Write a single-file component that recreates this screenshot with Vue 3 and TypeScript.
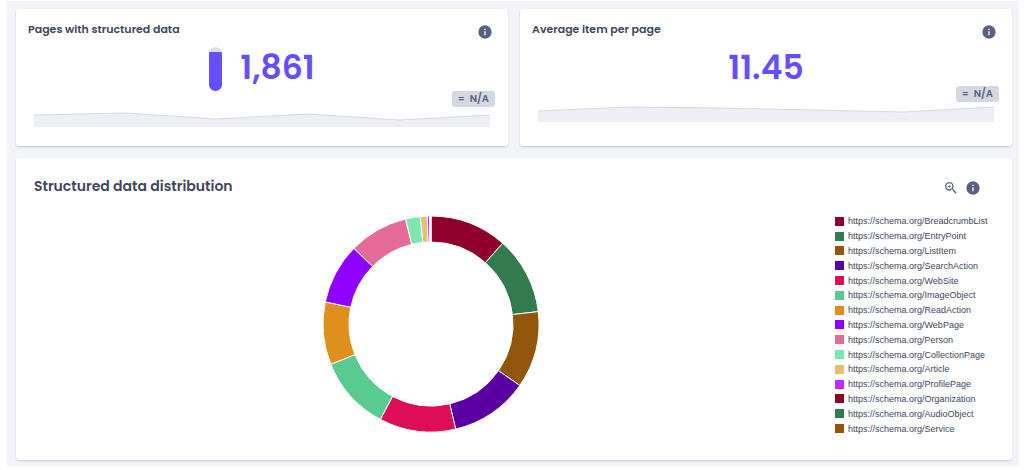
<script setup lang="ts">
interface Metric {
  id: string
  title: string
  value: string
  gauge: number | null
  trend: number[]
}

interface Slice {
  name: string
  color: string
  from: number
  to: number
}

const metrics: Metric[] = [
  { id: 'pages', title: 'Pages with structured data', value: '1,861', gauge: 88, trend: [8, 6, 12, 7, 13, 8] },
  { id: 'average', title: 'Average item per page', value: '11.45', gauge: null, trend: [9, 5, 6, 8, 10, 5] },
]

const types: [string, string, number][] = [
  ['BreadcrumbList', '#8f002d', 41.6],
  ['EntryPoint', '#337a4e', 83.4],
  ['ListItem', '#91560b', 124.7],
  ['SearchAction', '#5a00a3', 166.8],
  ['WebSite', '#de0d57', 208],
  ['ImageObject', '#59cb90', 248.1],
  ['ReadAction', '#df901c', 281.8],
  ['WebPage', '#9000ff', 314.5],
  ['Person', '#e56c98', 346.4],
  ['CollectionPage', '#7ce8b0', 354.3],
  ['Article', '#e9c072', 358],
  ['ProfilePage', '#b82eff', 359.2],
  ['Organization', '#8f002d', 359.6],
  ['AudioObject', '#337a4e', 359.8],
  ['Service', '#91560b', 360],
]

const slices: Slice[] = types.map(([name, color, to], i) => ({
  name: `https://schema.org/${name}`,
  color,
  from: i === 0 ? 0 : types[i - 1][2],
  to,
}))

function point(radius: number, degrees: number): string {
  const a = (degrees * Math.PI) / 180
  return `${(110 + radius * Math.sin(a)).toFixed(2)} ${(110 - radius * Math.cos(a)).toFixed(2)}`
}

function ring(s: Slice): string {
  return `M${point(108, s.from)}A108 108 0 0 1 ${point(108, s.to)}L${point(82, s.to)}A82 82 0 0 0 ${point(82, s.from)}Z`
}

function line(trend: number[]): string {
  return trend.map((y, i) => `${(i * 456) / (trend.length - 1)},${y}`).join(' ')
}

const infoPath =
  'M13 9h-2V7h2m0 10h-2v-6h2m-1-9A10 10 0 0 0 2 12a10 10 0 0 0 10 10 10 10 0 0 0 10-10A10 10 0 0 0 12 2Z'
const zoomPath =
  'M15.5 14h-.79l-.28-.27A6.47 6.47 0 0 0 16 9.5 6.5 6.5 0 1 0 9.5 16c1.61 0 3.09-.59 4.23-1.57l.27.28v.79l5 4.99L20.49 19l-4.99-5m-6 0C7 14 5 12 5 9.5S7 5 9.5 5 14 7 14 9.5 12 14 9.5 14m2.5-4h-2v2H9v-2H7V9h2V7h1v2h2v1Z'
</script>

<template>
  <main class="panel">
    <section v-for="m in metrics" :key="m.id" class="card metric" :class="m.id" :aria-labelledby="m.id">
      <header class="metric-head">
        <h2 :id="m.id" class="metric-title">{{ m.title }}</h2>
        <button type="button" class="icon" :aria-label="`About ${m.title}`">
          <svg viewBox="0 0 24 24"><path :d="infoPath" /></svg>
        </button>
      </header>
      <div class="reading">
        <span v-if="m.gauge !== null" class="gauge">
          <span class="level" :style="{ height: m.gauge + '%' }"></span>
        </span>
        <span class="value">{{ m.value }}</span>
      </div>
      <div class="change">
        <span class="badge"><span class="equal">=</span>N/A</span>
      </div>
      <svg class="trend" viewBox="0 0 456 20" preserveAspectRatio="none" aria-hidden="true">
        <polygon :points="`0,20 ${line(m.trend)} 456,20`" fill="#eeeff4" />
        <polyline :points="line(m.trend)" fill="none" stroke="#d6d8e1" />
      </svg>
    </section>

    <section class="card distribution" aria-labelledby="distribution">
      <header class="dist-head">
        <h2 id="distribution" class="dist-title">Structured data distribution</h2>
        <div class="actions">
          <button type="button" class="icon" aria-label="Zoom in">
            <svg viewBox="0 0 24 24"><path :d="zoomPath" /></svg>
          </button>
          <button type="button" class="icon" aria-label="About structured data distribution">
            <svg viewBox="0 0 24 24"><path :d="infoPath" /></svg>
          </button>
        </div>
      </header>
      <div class="dist-body">
        <div class="chart">
          <svg class="donut" viewBox="0 0 220 220" role="img" aria-labelledby="distribution">
            <path v-for="s in slices" :key="s.name" :d="ring(s)" :fill="s.color" stroke="#fff" />
          </svg>
        </div>
        <ul class="legend">
          <li v-for="s in slices" :key="s.name">
            <span class="swatch" :style="{ background: s.color }"></span>{{ s.name }}
          </li>
        </ul>
      </div>
    </section>
  </main>
</template>

<style>
body {
  margin: 0;
  background: #fff;
}
</style>

<style scoped>
.panel {
  display: grid;
  grid-template-columns: 1fr 1fr;
  gap: 12px;
  margin: 1px 5px 0 7px;
  padding: 8px 7px 6px 9px;
  background: #f3f4f8;
  color: #41455a;
  font-family: Poppins, Inter, "Open Sans", sans-serif;
}
.card {
  background: #fff;
  border-radius: 3px;
  box-shadow: 0 1px 2px rgba(60, 66, 95, 0.25);
}
h2 {
  margin: 0;
  font-weight: 600;
}
.metric {
  padding-bottom: 19px;
}
.average {
  padding-bottom: 24px;
}
.metric-head {
  display: flex;
  justify-content: space-between;
  align-items: flex-start;
  height: 23px;
  padding: 15px 15px 0 12px;
}
.metric-title {
  font-size: 11px;
  line-height: 11px;
}
.icon {
  display: block;
  width: 16px;
  height: 16px;
  padding: 0;
  border: 0;
  background: none;
  color: #5c6184;
  cursor: pointer;
}
.icon svg {
  display: block;
  width: 16px;
  height: 16px;
  fill: currentColor;
}
.reading {
  display: flex;
  justify-content: center;
  gap: 18px;
  height: 44px;
}
.average .reading {
  height: 39px;
}
.value {
  color: #654ffb;
  font-size: 33px;
  font-weight: 600;
  line-height: 42px;
}
.gauge {
  display: flex;
  align-items: flex-end;
  width: 13px;
  height: 44px;
  border-radius: 7px;
  overflow: hidden;
  background: #dcdee6;
}
.level {
  width: 100%;
  background: #654ffb;
}
.change {
  display: flex;
  justify-content: flex-end;
  padding-right: 13px;
}
.badge {
  display: flex;
  justify-content: space-between;
  box-sizing: border-box;
  width: 43px;
  height: 16px;
  padding: 0 6px;
  border-radius: 3px;
  background: #d5d7e1;
  color: #5c6184;
  font-size: 10px;
  font-weight: 600;
  line-height: 16px;
}
.equal {
  font-size: 9px;
}
.trend {
  display: block;
  width: calc(100% - 36px);
  height: 20px;
  margin: 0 18px;
}
.distribution {
  grid-column: 1 / -1;
}
.dist-head {
  display: flex;
  justify-content: space-between;
  align-items: center;
  padding: 18px 31px 0 18px;
}
.dist-title {
  font-size: 14px;
  line-height: 20px;
}
.actions {
  display: flex;
  gap: 6px;
  padding-top: 4px;
}
.dist-body {
  display: flex;
  gap: 7px;
  padding: 18px 0 24px 18px;
}
.chart {
  flex: 1;
  display: flex;
  justify-content: center;
}
.donut {
  width: 220px;
  height: 220px;
}
.legend {
  display: grid;
  grid-auto-rows: 1fr;
  box-sizing: border-box;
  width: 177px;
  height: 222px;
  margin: 0;
  padding: 0;
  list-style: none;
  font-family: "Liberation Sans", Arial, sans-serif;
  font-size: 9px;
  line-height: 14px;
  white-space: nowrap;
}
.legend li {
  display: flex;
  align-items: center;
  gap: 4px;
}
.swatch {
  width: 9px;
  height: 9px;
}
</style>
